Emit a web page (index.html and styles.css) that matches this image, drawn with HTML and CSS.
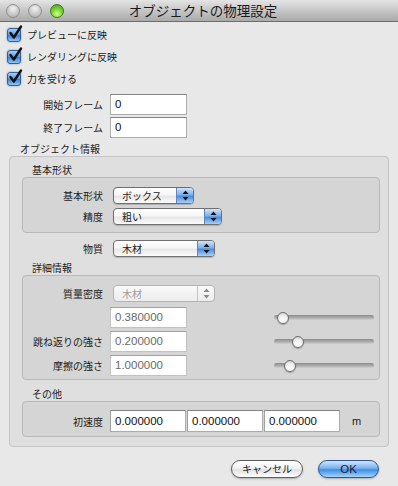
FILE: index.html
```html
<!DOCTYPE html>
<html lang="ja">
<head>
<meta charset="utf-8">
<title>オブジェクトの物理設定</title>
<link rel="stylesheet" href="styles.css">
</head>
<body>
<div class="window">
  <div class="titlebar">
    <div class="lights"><span class="light gray"></span><span class="light gray"></span><span class="light green"></span></div>
    <div class="title">オブジェクトの物理設定</div>
  </div>
  <div class="content">
    <div class="check-row"><span class="checkbox"><svg width="16" height="16" viewBox="0 0 16 16"><path d="M3.5 8 L6.8 12.5 L14 1.5" fill="none" stroke="#101010" stroke-width="2.4" stroke-linecap="round" stroke-linejoin="round"/></svg></span><span class="cb-label">プレビューに反映</span></div>
    <div class="check-row"><span class="checkbox"><svg width="16" height="16" viewBox="0 0 16 16"><path d="M3.5 8 L6.8 12.5 L14 1.5" fill="none" stroke="#101010" stroke-width="2.4" stroke-linecap="round" stroke-linejoin="round"/></svg></span><span class="cb-label">レンダリングに反映</span></div>
    <div class="check-row"><span class="checkbox"><svg width="16" height="16" viewBox="0 0 16 16"><path d="M3.5 8 L6.8 12.5 L14 1.5" fill="none" stroke="#101010" stroke-width="2.4" stroke-linecap="round" stroke-linejoin="round"/></svg></span><span class="cb-label">力を受ける</span></div>

    <div class="frow top first"><span class="lbl l103">開始フレーム</span><div class="field">0</div></div>
    <div class="frow top second"><span class="lbl l103">終了フレーム</span><div class="field">0</div></div>

    <div class="outer-title">オブジェクト情報</div>
    <div class="box outer">
      <div class="gtitle first">基本形状</div>
      <div class="box inner shape">
        <div class="prow"><span class="lbl l80">基本形状</span>
          <div class="popup w81"><span class="ptext">ボックス</span><span class="parrows"><svg width="7" height="11" viewBox="0 0 7 11"><path d="M3.5 0.5 L6.5 4 H0.5Z M3.5 10.5 L6.5 7 H0.5Z" fill="#111"/></svg></span></div>
        </div>
        <div class="prow gap4"><span class="lbl l80">精度</span>
          <div class="popup w109"><span class="ptext">粗い</span><span class="parrows"><svg width="7" height="11" viewBox="0 0 7 11"><path d="M3.5 0.5 L6.5 4 H0.5Z M3.5 10.5 L6.5 7 H0.5Z" fill="#111"/></svg></span></div>
        </div>
      </div>

      <div class="prow material"><span class="lbl l81">物質</span>
        <div class="popup w102"><span class="ptext">木材</span><span class="parrows"><svg width="7" height="11" viewBox="0 0 7 11"><path d="M3.5 0.5 L6.5 4 H0.5Z M3.5 10.5 L6.5 7 H0.5Z" fill="#111"/></svg></span></div>
      </div>

      <div class="gtitle detail-title">詳細情報</div>
      <div class="box inner detail">
        <div class="prow"><span class="lbl l80">質量密度</span>
          <div class="popup w102 disabled"><span class="ptext">木材</span><span class="parrows"><svg width="7" height="11" viewBox="0 0 7 11"><path d="M3.5 0.5 L6.5 4 H0.5Z M3.5 10.5 L6.5 7 H0.5Z" fill="#8a8a8a"/></svg></span></div>
        </div>
        <div class="frow drow d1"><span class="lbl l80"></span><div class="field dim">0.380000</div>
          <div class="slider"><span class="track"></span><span class="knob" style="left:3px"></span></div>
        </div>
        <div class="frow drow"><span class="lbl l80">跳ね返りの強さ</span><div class="field dim">0.200000</div>
          <div class="slider"><span class="track"></span><span class="knob" style="left:18px"></span></div>
        </div>
        <div class="frow drow"><span class="lbl l80">摩擦の強さ</span><div class="field dim">1.000000</div>
          <div class="slider"><span class="track"></span><span class="knob" style="left:10px"></span></div>
        </div>
      </div>

      <div class="gtitle other-title">その他</div>
      <div class="box inner other">
        <div class="frow orow"><span class="lbl l80">初速度</span>
          <div class="vec">
            <div class="field f76">0.000000</div>
            <div class="field f76">0.000000</div>
            <div class="field f76">0.000000</div>
          </div>
          <span class="unit">m</span>
        </div>
      </div>
    </div>

    <div class="buttons">
      <div class="btn cancel">キャンセル</div>
      <div class="btn ok">OK</div>
    </div>
  </div>
</div>
</body>
</html>
```
FILE: styles.css
```css
* { box-sizing: border-box; }
html, body { margin: 0; padding: 0; }
body {
  width: 398px;
  height: 486px;
  overflow: hidden;
  background: #e8e8e8;
  font-family: "Noto Sans CJK JP", sans-serif;
  font-size: 10px;
  color: #1c1c1c;
}
.window { width: 398px; height: 486px; background: #e8e8e8; }

.titlebar {
  position: relative;
  height: 22px;
  background: linear-gradient(#e4e4e4, #c6c6c6 50%, #aaaaaa);
  border-bottom: 1px solid #6c6c6c;
  display: flex;
  align-items: center;
  justify-content: center;
  padding-left: 8px;
}
.lights { position: absolute; left: 6px; top: 4px; display: flex; gap: 8px; }
.light { width: 14px; height: 14px; border-radius: 50%; display: block; }
.light.gray {
  background: radial-gradient(circle at 50% 30%, #f4f4f4 0, #d0d0d0 45%, #a9a9a9 100%);
  border: 1px solid #8e8e8e;
}
.light.green {
  background: radial-gradient(circle at 50% 75%, #d6ff8a 0, #7fd63a 45%, #3f9a14 100%);
  border: 1px solid #3e7a1c;
}
.title { font-size: 13.5px; color: #1a1a1a; line-height: 21px; letter-spacing: 0; }

.content { display: flex; flex-direction: column; padding-top: 6px; }

.check-row { display: flex; align-items: center; height: 14px; margin-left: 7px; margin-bottom: 8px; }
.checkbox {
  position: relative;
  width: 14px; height: 14px; border-radius: 3px;
  border: 1px solid #2f5f9e;
  background: linear-gradient(#a9cdf4, #5b98de 50%, #3a7ed3 51%, #8fc3f3);
  box-shadow: 0 0 2px rgba(40, 90, 170, 0.6);
  flex: none;
}
.checkbox svg { position: absolute; left: -1px; top: -4px; display: block; overflow: visible; }
.cb-label { margin-left: 6px; line-height: 14px; }

.lbl { text-align: right; flex: none; white-space: nowrap; }
.l103 { width: 103px; }
.l80 { width: 80px; }
.l81 { width: 81px; }

.frow { display: flex; align-items: center; height: 21px; gap: 7px; }
.frow.first { margin-bottom: 2px; }
.frow.second { margin-bottom: 3px; }

.field {
  width: 77px; height: 21px;
  background: #fff;
  border: 1px solid #ababab;
  border-top-color: #848484;
  padding-left: 4px;
  font-family: "Liberation Sans", "Noto Sans CJK JP", sans-serif;
  font-size: 11.5px;
  line-height: 19px;
  color: #111;
}
.field.dim { color: #6a6a6a; border-color: #c2c2c2; border-top-color: #a0a0a0; }

.outer-title { margin-left: 20px; height: 15px; line-height: 15px; }

.box { border-radius: 4px; }
.box.outer {
  margin-left: 9px;
  width: 380px;
  background: #dfdfdf;
  border: 1px solid #c4c4c4;
  padding: 0 8px 9px 12px;
  display: flex; flex-direction: column;
}
.box.inner {
  background: #d5d5d5;
  border: 1px solid #b9b9b9;
  display: flex; flex-direction: column;
}

.gtitle { margin-left: 10px; height: 14px; line-height: 14px; }
.gtitle.first { margin-top: 6px; }
.gtitle.detail-title { margin-top: 4px; }
.gtitle.other-title { margin-top: 7px; }

.inner.shape { padding: 9px 0 7px 0; }
.prow { display: flex; align-items: center; height: 17px; gap: 10px; }
.prow.gap4 { margin-top: 4px; }
.prow.material { margin-top: 7px; }

.popup {
  height: 17px;
  border: 1px solid #6e6e6e;
  border-radius: 4px;
  background: linear-gradient(#ffffff, #f6f6f6 45%, #e6e6e6 55%, #fbfbfb);
  box-shadow: 0 1px 1px rgba(0, 0, 0, 0.18);
  display: flex; align-items: center;
  overflow: hidden;
}
.w81 { width: 81px; }
.w109 { width: 109px; }
.w102 { width: 102px; }
.ptext { padding-left: 8px; line-height: 15px; flex: 1; }
.parrows {
  width: 17px; height: 15px;
  flex: none;
  border-left: 1px solid #5f86ba;
  background: linear-gradient(#d0e4fb, #7fb0ea 45%, #4a8ddc 55%, #a9d0fa);
  display: flex; align-items: center; justify-content: center;
}
.parrows svg { display: block; }
.popup.disabled { border-color: #b3b3b3; box-shadow: none; background: linear-gradient(#fafafa, #ececec); }
.popup.disabled .ptext { color: #9c9c9c; }
.popup.disabled .parrows { background: transparent; border-left-color: #c4c4c4; }

.inner.detail { padding: 9px 5px 3px 0; }
.drow { gap: 7px; }
.drow.d1 { margin-top: 5px; }
.drow + .drow { margin-top: 3px; }
.slider { position: relative; width: 100px; height: 12px; margin-left: auto; display: flex; align-items: center; }
.track {
  display: block; width: 100%; height: 5px; border-radius: 3px;
  background: linear-gradient(#8a8a8a, #b0b0b0 60%, #d0d0d0);
}
.knob {
  position: absolute; top: 0;
  width: 12px; height: 12px; border-radius: 50%;
  border: 1px solid #6f6f6f;
  background: radial-gradient(circle at 50% 70%, #ffffff 0, #eeeeee 50%, #c4c4c4 100%);
  box-shadow: 0 1px 1px rgba(0, 0, 0, 0.25);
}

.inner.other { padding: 8px 0 4px 0; }
.orow { height: 22px; }
.vec { display: flex; }
.field.f76 { width: 76px; height: 22px; line-height: 20px; border-left-color: #a0a0a0; }
.vec .field + .field { margin-left: 1px; }
.unit { margin-left: 5px; font-family: "Liberation Sans", sans-serif; font-size: 11px; }

.buttons { display: flex; justify-content: flex-end; gap: 15px; padding-right: 19px; margin-top: 13px; }
.btn {
  height: 18px; border-radius: 9px;
  display: flex; align-items: center; justify-content: center;
  line-height: 16px;
  box-shadow: 0 1px 2px rgba(0, 0, 0, 0.25);
}
.btn.cancel {
  width: 72px;
  border: 1px solid #5f5f5f;
  background: linear-gradient(#ffffff, #f2f2f2 45%, #e0e0e0 55%, #ffffff);
}
.btn.ok {
  width: 61px;
  border: 1px solid #30568a;
  background: linear-gradient(#cfe6fd, #79b2ef 45%, #3f8de2 55%, #a6d4ff);
  font-family: "Liberation Sans", sans-serif;
  font-size: 11.5px;
}
```
